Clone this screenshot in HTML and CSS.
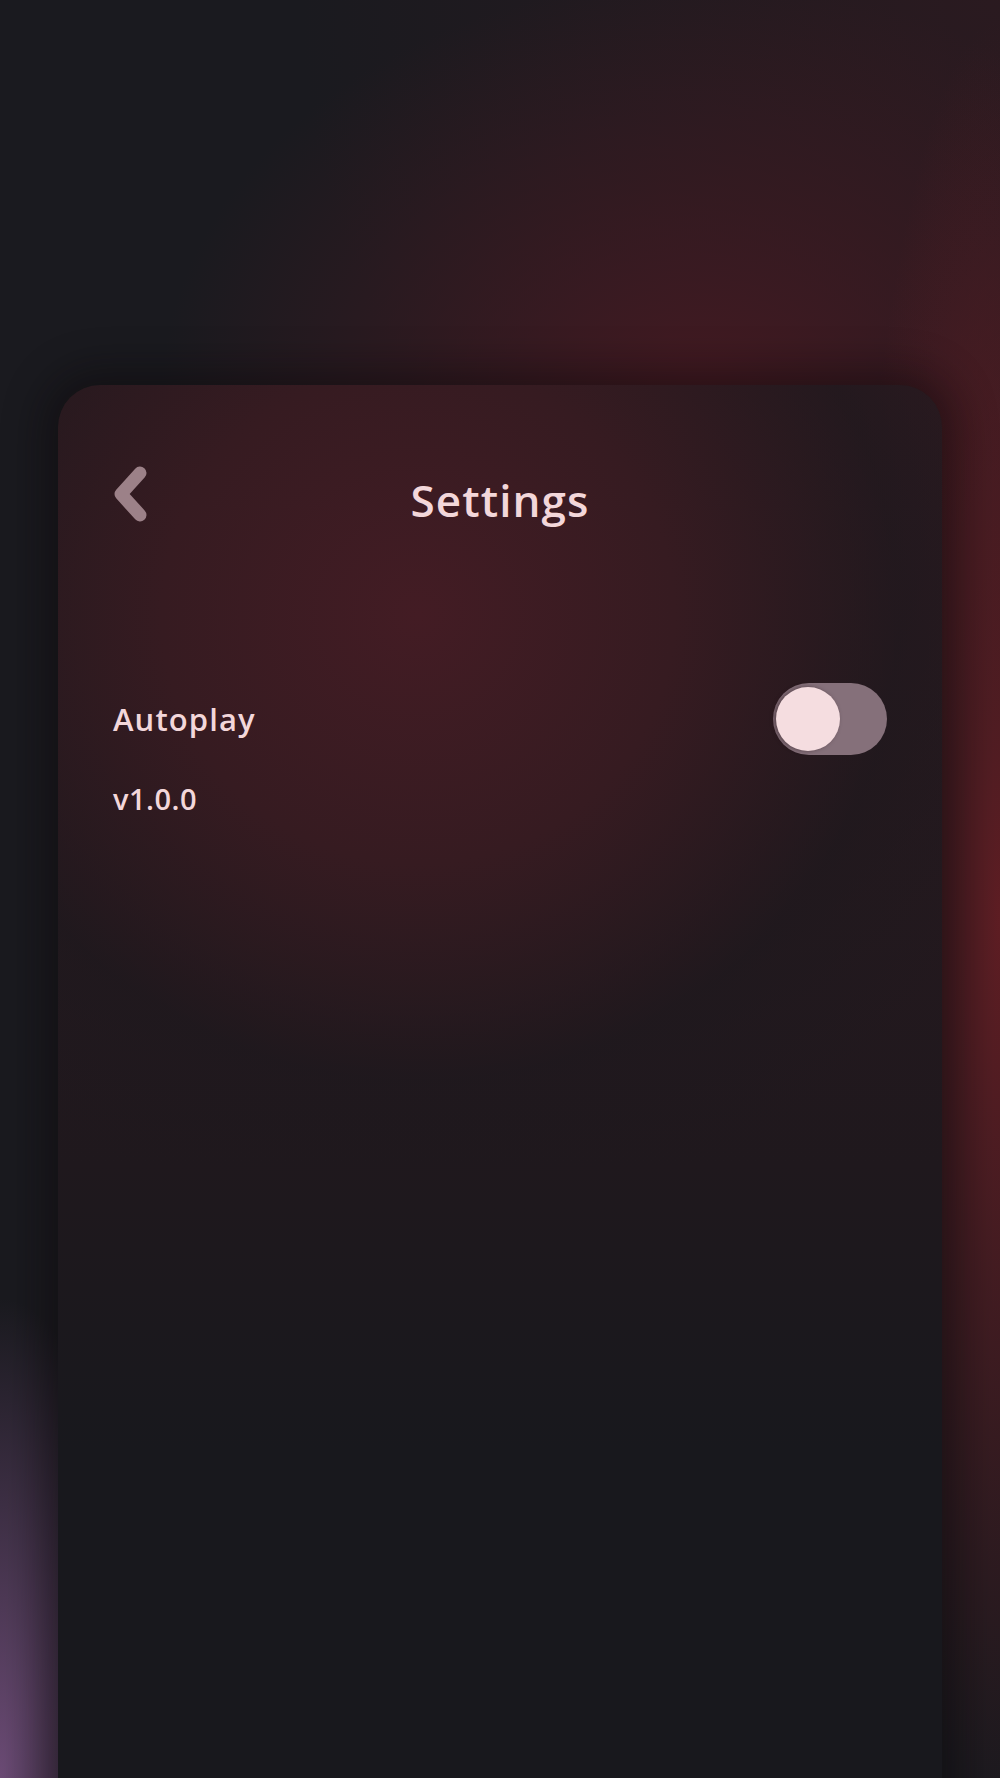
FILE: index.html
```html
<!DOCTYPE html>
<html lang="en">
<head>
<meta charset="utf-8">
<title>Settings</title>
<link rel="stylesheet" href="styles.css">
</head>
<body>
<div class="screen">
  <main class="card">
    <header class="header">
      <button class="back" aria-label="Back">
        <svg width="40" height="60" viewBox="0 0 40 60"><path d="M27 8 L8 29 L27 50" fill="none" stroke="currentColor" stroke-width="13" stroke-linecap="round" stroke-linejoin="round"/></svg>
      </button>
      <h1 class="title">Settings</h1>
      <span class="spacer"></span>
    </header>
    <section class="list">
      <div class="row">
        <span class="label">Autoplay</span>
        <span class="toggle"><span class="thumb"></span></span>
      </div>
      <div class="version">v1.0.0</div>
    </section>
  </main>
</div>
</body>
</html>
```
FILE: styles.css
```css
html, body {
  margin: 0;
  padding: 0;
}
body {
  width: 1000px;
  height: 1778px;
  overflow: hidden;
  background-color: #1a1a1f;
  background-image:
    radial-gradient(ellipse 150px 900px at 1000px 920px, rgba(98, 30, 36, 0.95), rgba(98, 30, 36, 0) 100%),
    radial-gradient(ellipse 150px 480px at 0px 1778px, rgba(112, 78, 122, 0.95), rgba(112, 78, 122, 0) 100%),
    radial-gradient(ellipse 540px 420px at 700px 400px, rgba(68, 26, 34, 1), rgba(68, 26, 34, 0) 100%),
    radial-gradient(ellipse 700px 700px at 1000px 0px, rgba(44, 26, 32, 0.9), rgba(44, 26, 32, 0) 100%);
  font-family: "Open Sans", "Noto Sans", sans-serif;
  color: #f3d7da;
}
.screen {
  height: 100%;
  padding: 385px 58px 0 58px;
  box-sizing: border-box;
}
.card {
  height: 1420px;
  border-radius: 42px 42px 0 0;
  background-color: #18181d;
  background-image:
    radial-gradient(ellipse 640px 620px at 360px 230px, #431c24 0%, #361b21 40%, rgba(30, 24, 29, 0.6) 75%, rgba(24, 24, 29, 0) 100%),
    linear-gradient(to bottom, #2c1a20 0%, #1f181d 55%, #18181d 75%);
  box-shadow: 0 0 40px 14px rgba(10, 6, 8, 0.45);
  padding: 0 55px;
  box-sizing: border-box;
}
.header {
  display: flex;
  align-items: center;
  justify-content: space-between;
  height: 220px;
}
.back {
  width: 40px;
  height: 60px;
  padding: 0;
  border: 0;
  background: none;
  color: #9c8188;
  display: flex;
}
.title {
  margin: 10px 0 0 0;
  font-size: 44px;
  font-weight: 600;
  letter-spacing: 1.1px;
  color: #f3d7da;
}
.spacer {
  width: 40px;
}
.list {
  padding-top: 78px;
}
.row {
  display: flex;
  align-items: center;
  justify-content: space-between;
  height: 72px;
}
.label {
  font-size: 31px;
  font-weight: 600;
  letter-spacing: 1.1px;
}
.toggle {
  width: 114px;
  height: 72px;
  border-radius: 36px;
  background: #85707a;
  display: flex;
  align-items: center;
  padding: 0 3px;
  box-sizing: border-box;
}
.thumb {
  width: 64px;
  height: 64px;
  border-radius: 50%;
  background: #f5dde0;
  box-shadow: -2px 0 4px rgba(40, 20, 26, 0.5);
}
.version {
  margin-top: 24px;
  font-size: 29px;
  font-weight: 600;
  letter-spacing: 0.5px;
}
```
